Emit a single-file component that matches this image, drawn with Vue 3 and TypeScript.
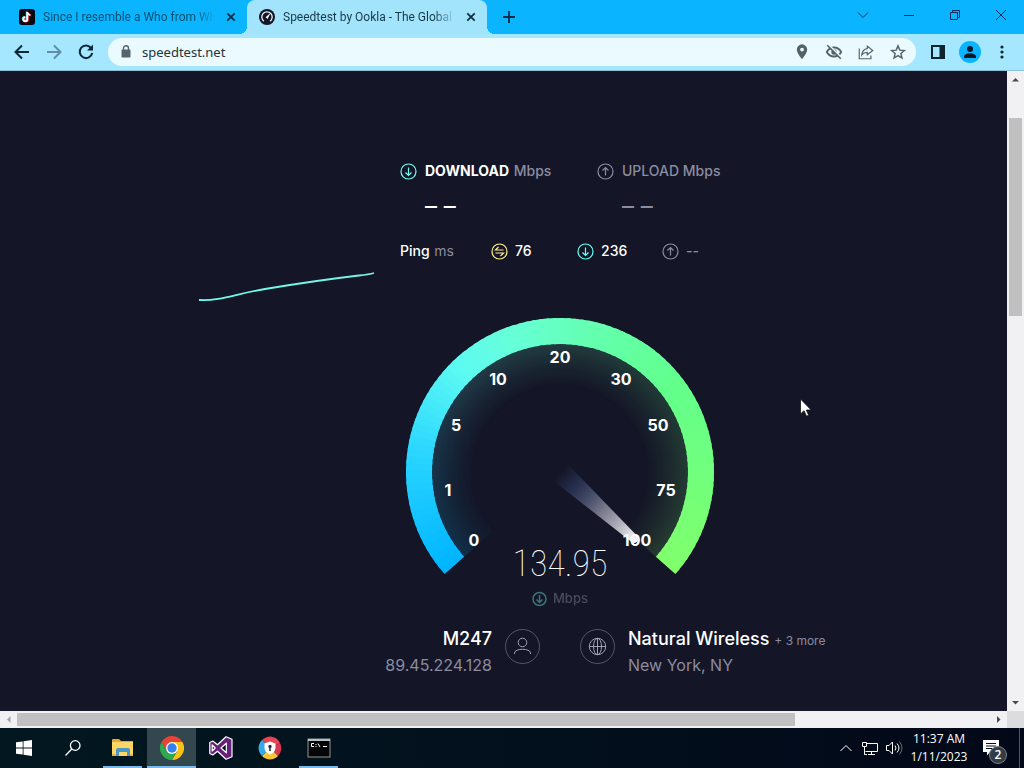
<script setup lang="ts">
import { ref } from 'vue'

type Rgb = [number, number, number]

const address = ref('speedtest.net')

const START = -131.5
const END = 131.5
const STEPS = 100

const stops: { at: number; rgb: Rgb }[] = [
  { at: 0, rgb: [0, 180, 255] },
  { at: 0.18, rgb: [40, 212, 255] },
  { at: 0.33, rgb: [92, 250, 243] },
  { at: 0.42, rgb: [102, 255, 218] },
  { at: 0.54, rgb: [100, 255, 178] },
  { at: 0.7, rgb: [98, 255, 140] },
  { at: 1, rgb: [128, 255, 108] },
]

function colourAt(t: number): string {
  let i = 1
  while (i < stops.length - 1 && t > stops[i].at) i++
  const a = stops[i - 1]
  const b = stops[i]
  const k = (t - a.at) / (b.at - a.at)
  const mix = a.rgb.map((v, n) => Math.round(v + (b.rgb[n] - v) * k))
  return `rgb(${mix.join(',')})`
}

function point(deg: number, r: number): string {
  const rad = (deg * Math.PI) / 180
  return `${(Math.sin(rad) * r).toFixed(2)} ${(-Math.cos(rad) * r).toFixed(2)}`
}

function arc(from: number, to: number, outer: number, inner: number): string {
  return `M${point(from, outer)}A${outer} ${outer} 0 0 1 ${point(to, outer)}L${point(to, inner)}A${inner} ${inner} 0 0 0 ${point(from, inner)}Z`
}

const segments = Array.from({ length: STEPS }, (_, i) => {
  const size = (END - START) / STEPS
  const from = START + i * size
  const to = Math.min(from + size * 1.5, END)
  return {
    fill: colourAt((i + 0.5) / STEPS),
    band: arc(from, to, 154, 128),
    glow: arc(from, to, 129, 70),
  }
})

const ticks = [
  { label: '0', x: -86, y: 74 },
  { label: '1', x: -112, y: 24 },
  { label: '5', x: -104, y: -41 },
  { label: '10', x: -62, y: -87 },
  { label: '20', x: 0, y: -109 },
  { label: '30', x: 61, y: -87 },
  { label: '50', x: 98, y: -41 },
  { label: '75', x: 106, y: 24 },
  { label: '100', x: 77, y: 74 },
]
</script>

<template>
  <div class="desktop">
    <header class="tabs">
      <div class="tab">
        <svg class="favicon" viewBox="0 0 16 16" aria-hidden="true">
          <rect width="16" height="16" rx="3" fill="#080810" />
          <path d="M8.3 3v7.2a2 2 0 1 1-2-2M8.3 3c.2 1.7 1.3 2.8 3 3" fill="none" stroke="#35e5e5" stroke-width="1.8" transform="translate(-.6 -.4)" />
          <path d="M8.3 3v7.2a2 2 0 1 1-2-2M8.3 3c.2 1.7 1.3 2.8 3 3" fill="none" stroke="#f34" stroke-width="1.8" transform="translate(.6 .4)" />
          <path d="M8.3 3v7.2a2 2 0 1 1-2-2M8.3 3c.2 1.7 1.3 2.8 3 3" fill="none" stroke="#fff" stroke-width="1.7" />
        </svg>
        <span class="title">Since I resemble a Who from Wh</span>
        <button class="close" aria-label="Close tab"><svg viewBox="0 0 16 16"><path d="M4.3 4.3l7.4 7.4M11.7 4.3l-7.4 7.4" /></svg></button>
      </div>
      <div class="tab active">
        <svg class="favicon" viewBox="0 0 16 16" aria-hidden="true">
          <circle cx="8" cy="8" r="8" fill="#141526" />
          <path d="M4.9 12.2a5.2 5.2 0 1 1 6.2 0" fill="none" stroke="#e9f6ff" stroke-width="1.3" />
          <path d="M6.9 8.3l3.8-3.3-2.2 4.5z" fill="#fff" stroke="#fff" stroke-width=".6" />
        </svg>
        <span class="title">Speedtest by Ookla - The Global</span>
        <button class="close" aria-label="Close tab"><svg viewBox="0 0 16 16"><path d="M4.3 4.3l7.4 7.4M11.7 4.3l-7.4 7.4" /></svg></button>
      </div>
      <button class="new-tab" aria-label="New tab"><svg viewBox="0 0 16 16"><path d="M8 2v12M2 8h12" /></svg></button>
      <div class="window-controls">
        <button aria-label="Search tabs"><svg viewBox="0 0 12 12"><path d="M1 3.5l5 5 5-5" /></svg></button>
        <button aria-label="Minimize"><svg viewBox="0 0 12 12"><path d="M1 6.5h10" /></svg></button>
        <button aria-label="Restore"><svg viewBox="0 0 12 12"><path d="M1.5 3.5h7v7h-7zM3.5 3.5v-2h7v7h-2" /></svg></button>
        <button aria-label="Close"><svg viewBox="0 0 12 12"><path d="M1 1l10 10M11 1L1 11" /></svg></button>
      </div>
    </header>

    <nav class="toolbar">
      <button class="tool" aria-label="Back"><svg viewBox="0 0 20 20"><path d="M17 10H4M10 3.5L3.5 10l6.5 6.5" class="bold" /></svg></button>
      <button class="tool faded" aria-label="Forward"><svg viewBox="0 0 20 20"><path d="M3 10h13M10 3.5l6.5 6.5-6.5 6.5" class="bold" /></svg></button>
      <button class="tool" aria-label="Reload"><svg viewBox="0 0 20 20"><path d="M15.2 6.2A6.3 6.3 0 1 0 16.2 11" class="bold" /><path d="M17 2.5v6h-6z" fill="#0b2638" /></svg></button>
      <div class="omnibox">
        <svg class="lock" viewBox="0 0 12 16" aria-hidden="true"><rect x="1.5" y="5.5" width="9" height="8" rx="1" fill="#56656c" /><path d="M3.5 6V4.2a2.5 2.5 0 0 1 5 0V6" fill="none" stroke="#56656c" stroke-width="1.4" /></svg>
        <input v-model="address" class="address" type="text" aria-label="Address" />
        <button class="tool grey" aria-label="Location"><svg viewBox="0 0 20 20"><path fill-rule="evenodd" d="M10 1.5a5.8 5.8 0 0 0-5.8 5.8c0 4.2 5.8 10.7 5.8 10.7s5.8-6.5 5.8-10.7A5.8 5.8 0 0 0 10 1.5zm0 3.7a2.1 2.1 0 1 1 0 4.2 2.1 2.1 0 0 1 0-4.2z" fill="#53636a" /></svg></button>
        <button class="tool grey" aria-label="Third-party cookies blocked"><svg viewBox="0 0 20 20"><path d="M2 10c1.8-3.3 4.6-5 8-5s6.2 1.7 8 5c-1.8 3.3-4.6 5-8 5s-6.2-1.7-8-5z" fill="none" stroke="#53636a" stroke-width="2" /><circle cx="10" cy="10" r="3" fill="#53636a" /><path d="M3.5 1.5L19 17" stroke="#eafaff" stroke-width="2" /><path d="M2.5 2.5l15 15" stroke="#53636a" stroke-width="1.7" /></svg></button>
        <button class="tool grey" aria-label="Share"><svg viewBox="0 0 20 20"><path d="M2.5 6v11.5h13V14M11.5 3.5l6 4.8-6 4.7v-2.6c-3 0-4.7.8-6.2 2.8.4-4 2.4-6.6 6.2-7z" fill="none" stroke="#53636a" stroke-width="1.3" /></svg></button>
        <button class="tool grey" aria-label="Bookmark this page"><svg viewBox="0 0 20 20"><path d="M10 3.2l2 4.7 5.1.4-3.9 3.4 1.2 5-4.4-2.7-4.4 2.7 1.2-5-3.9-3.4 5.1-.4z" fill="none" stroke="#53636a" stroke-width="1.6" /></svg></button>
      </div>
      <div class="tool-group">
        <button class="tool" aria-label="Side panel"><svg viewBox="0 0 20 20"><path fill-rule="evenodd" d="M3 3h14v14H3zm2 2v10h6.5V5z" fill="#10242e" /></svg></button>
        <button class="tool" aria-label="Profile"><svg class="avatar" viewBox="0 0 22 22"><circle cx="11" cy="11" r="11" fill="#0ab4ff" /><circle cx="11" cy="8" r="3" fill="#081722" /><path d="M5 16c0-5 12-5 12 0v1H5z" fill="#081722" /></svg></button>
        <button class="tool" aria-label="Menu"><svg viewBox="0 0 20 20" fill="#10242e"><circle cx="10" cy="5" r="1.6" /><circle cx="10" cy="10" r="1.6" /><circle cx="10" cy="15" r="1.6" /></svg></button>
      </div>
    </nav>

    <main class="viewport">
      <section class="page">
        <svg class="graph" viewBox="0 0 176 34" aria-hidden="true">
          <defs><linearGradient id="line"><stop offset="0" stop-color="#6afff3" /><stop offset="1" stop-color="#7ceee0" /></linearGradient></defs>
          <path d="M0 30C22 31 36 24 66 19S130 9 160 5.5Q170 4.5 175 3" fill="none" stroke="url(#line)" stroke-width="1.8" />
        </svg>

        <div class="results">
          <div class="speeds">
            <div class="speed">
              <svg class="ring teal" viewBox="0 0 17 17"><circle cx="8.5" cy="8.5" r="7.5" /><path d="M8.5 4.5v8M5.5 9.5l3 3 3-3" /></svg>
              <div class="name"><strong>DOWNLOAD</strong> Mbps</div>
              <div class="value">– –</div>
            </div>
            <div class="speed muted">
              <svg class="ring dim" viewBox="0 0 17 17"><circle cx="8.5" cy="8.5" r="7.5" /><path d="M8.5 12.5v-8M5.5 7.5l3-3 3 3" /></svg>
              <div class="name">UPLOAD Mbps</div>
              <div class="value">– –</div>
            </div>
          </div>

          <div class="pings">
            <span class="ping-name">Ping <small>ms</small></span>
            <span class="ping"><svg class="ring yellow" viewBox="0 0 17 17"><circle cx="8.5" cy="8.5" r="7.5" /><path d="M12.5 7h-8l3-3M4.5 10h8l-3 3" /></svg>76</span>
            <span class="ping"><svg class="ring teal" viewBox="0 0 17 17"><circle cx="8.5" cy="8.5" r="7.5" /><path d="M8.5 4.5v8M5.5 9.5l3 3 3-3" /></svg>236</span>
            <span class="ping muted"><svg class="ring dim" viewBox="0 0 17 17"><circle cx="8.5" cy="8.5" r="7.5" /><path d="M8.5 12.5v-8M5.5 7.5l3-3 3 3" /></svg>--</span>
          </div>

          <svg class="gauge" viewBox="-160 -162 320 305" role="img" aria-label="Download speed 134.95 Mbps">
            <defs>
              <radialGradient id="fade" gradientUnits="userSpaceOnUse" cx="0" cy="0" r="129">
                <stop offset="0.66" stop-color="#fff" stop-opacity="0" />
                <stop offset="0.82" stop-color="#fff" stop-opacity="0.07" />
                <stop offset="1" stop-color="#fff" stop-opacity="0.17" />
              </radialGradient>
              <mask id="inner" maskUnits="userSpaceOnUse" x="-160" y="-160" width="320" height="320">
                <circle r="130" fill="url(#fade)" />
              </mask>
              <linearGradient id="needle">
                <stop offset="0" stop-color="#5a78c8" stop-opacity="0" />
                <stop offset="0.2" stop-color="#5a78b8" stop-opacity="0.26" />
                <stop offset="0.55" stop-color="#c8c8dc" stop-opacity="0.55" />
                <stop offset="1" stop-color="#fff" />
              </linearGradient>
            </defs>
            <g mask="url(#inner)"><path v-for="(s, i) in segments" :key="i" :d="s.glow" :fill="s.fill" /></g>
            <path v-for="(s, i) in segments" :key="i" :d="s.band" :fill="s.fill" />
            <text v-for="t in ticks" :key="t.label" class="tick" :x="t.x" :y="t.y">{{ t.label }}</text>
            <path d="M0-11L102-4q4 4 0 8L0 11z" fill="url(#needle)" transform="rotate(42)" />
            <text class="reading" x="0" y="104">134.95</text>
            <g class="unit">
              <circle cx="-20.5" cy="127" r="6.5" />
              <path d="M-20.5 123v7M-23.5 127.5l3 3 3-3" />
              <text x="-7" y="131">Mbps</text>
            </g>
          </svg>
        </div>

        <div class="hosts">
          <div class="host client">
            <div><div class="host-name">M247</div><div class="host-sub">89.45.224.128</div></div>
            <svg class="badge" viewBox="0 0 35 35"><circle cx="17.5" cy="17.5" r="17" class="edge" /><circle cx="17.5" cy="13.5" r="4.3" /><path d="M9.5 25v-1c0-5 16-5 16 0v1" /></svg>
          </div>
          <div class="host">
            <svg class="badge" viewBox="0 0 35 35"><circle cx="17.5" cy="17.5" r="17" class="edge" /><circle cx="17.5" cy="17.5" r="8.2" /><ellipse cx="17.5" cy="17.5" rx="4" ry="8.2" /><path d="M17.5 9.3v16.4M9.3 17.5h16.4" /></svg>
            <div><div class="host-name">Natural Wireless <a href="#servers">+ 3 more</a></div><div class="host-sub">New York, NY</div></div>
          </div>
        </div>
      </section>

      <div class="vbar">
        <svg viewBox="0 0 17 17"><path d="M5 10.5h7L8.5 7z" /></svg>
        <div class="track"><div class="thumb"></div></div>
        <svg viewBox="0 0 17 17"><path d="M5 7h7l-3.5 3.5z" /></svg>
      </div>
      <div class="hbar">
        <svg class="off" viewBox="0 0 17 17"><path d="M10.5 5v7L7 8.5z" /></svg>
        <div class="track"><div class="thumb"></div></div>
        <svg viewBox="0 0 17 17"><path d="M7 5v7l3.5-3.5z" /></svg>
      </div>
      <div class="corner"></div>

      <svg class="cursor" viewBox="0 0 12 19" aria-hidden="true"><path d="M.5 1v15l3.5-3.3 2.5 5.5 2.2-1L6.3 12h4.9z" fill="#fff" stroke="#111" stroke-width=".8" /></svg>
    </main>

    <footer class="taskbar">
      <button aria-label="Start"><svg class="small" viewBox="0 0 16 16" fill="#fff"><path d="M0 2.3L6.7 1.4v6.2H0zM7.5 1.3L16 0v7.6H7.5zM0 8.4h6.7v6.2L0 13.7zM7.5 8.4H16V16l-8.5-1.2z" /></svg></button>
      <button aria-label="Search"><svg class="small" viewBox="0 0 16 16" fill="none" stroke="#fff" stroke-width="1.3"><circle cx="10.2" cy="5.5" r="4.8" /><path d="M6.8 9L.5 15.5" /></svg></button>
      <button class="open" aria-label="File Explorer"><svg viewBox="0 0 24 24"><path d="M1 4q0-1 1-1h6l2 2h12v4H1z" fill="#e8a92c" /><path d="M1 6h21v14H1z" fill="#fcd567" /><path d="M5 20v-6q0-2 2-2h10q2 0 2 2v6h-3v-4H8v4z" fill="#4a97c9" /><path d="M1 18h4v2H1zM19 18h3v2h-3z" fill="#e9b64a" /></svg></button>
      <button class="current" aria-label="Google Chrome"><svg viewBox="0 0 24 24"><path d="M12 24l5.2-9L12 6h10.4A12 12 0 0 1 12 24z" fill="#fbc116" /><path d="M1.6 6A12 12 0 0 0 12 24l5.2-9H6.8z" fill="#2da94f" /><path d="M1.6 6l5.2 9L12 6h10.4A12 12 0 0 0 1.6 6z" fill="#e84335" /><circle cx="12" cy="12" r="6" fill="#fff" /><circle cx="12" cy="12" r="4.7" fill="#3480ee" /></svg></button>
      <button aria-label="Visual Studio"><svg viewBox="0 0 24 24"><path fill-rule="evenodd" d="M17 .8l6 2.4v17.6l-6 2.4-8.5-8L3.8 19 .8 17.500v-11L3.800 5l4.700 3.800zM17.300 7.200L12 12l5.300 4.800zM3.200 9v6l3-3z" fill="#68217a" stroke="#fff" stroke-width="1.2" stroke-linejoin="round" /></svg></button>
      <button aria-label="Secure Browser"><svg viewBox="0 0 24 24"><path d="M12 12L4 4a11 11 0 0 1 18 3z" fill="#ea4351" /><path d="M12 12l10-5a11 11 0 0 1-2 13z" fill="#da3552" /><path d="M12 12l8 8a11 11 0 0 1-16 0z" fill="#fac43a" /><path d="M12 12l-8 8A11 11 0 0 1 4 4z" fill="#38a9e8" /><path d="M12 5.5l5.5 2v4c0 4-2.5 5.5-5.5 7-3-1.5-5.5-3-5.5-7v-4z" fill="#fff" /><circle cx="12" cy="10.5" r="1.7" fill="#28333b" /><path d="M11.2 11h1.6v4h-1.6z" fill="#28333b" /></svg></button>
      <button class="open" aria-label="Command Prompt"><svg viewBox="0 0 24 24"><rect x="1" y="3" width="22" height="18" fill="#050505" stroke="#8f989b" /><path d="M1 3h22v2H1z" fill="#b9c1c4" /><path d="M7 7.5H4.5v3H7M9 8v1M9 10v1M11 7.5l2 3.5M16 10.5h4" fill="none" stroke="#fff" /></svg></button>
      <div class="tray">
        <svg class="t-chev" viewBox="0 0 12 12"><path d="M.5 9L6 3.5 11.5 9" /></svg>
        <svg class="t-icon" viewBox="0 0 18 18"><path d="M5.5 4.5h11v8H4.5M10.5 12.5v3M7 15.5h7M1.5 3.5h4v4h-4zM3.5 7.5v8H6" /></svg>
        <svg class="t-icon" viewBox="0 0 18 18"><path d="M1.5 6.5H4L7.5 3v12L4 11.5H1.5zM10 6.5q2 2.5 0 5M12 4.5q4 4.5 0 9" /><path d="M14.5 2.5q5 6.5 0 13" opacity=".4" /></svg>
        <div class="clock"><time>11:37 AM</time><time>1/11/2023</time></div>
        <button class="notes" aria-label="2 notifications"><svg viewBox="0 0 16 16"><path d="M0 0h16v12H7l-3 3.5V12H0z" fill="#fff" /><path d="M3 3.5h10M3 6h10M3 8.5h6" stroke="#06121d" /></svg><span>2</span></button>
      </div>
    </footer>
  </div>
</template>

<style>
body {
  margin: 0;
}
</style>

<style scoped>
.desktop {
  display: flex;
  flex-direction: column;
  min-height: 100vh;
  background: #141526;
  font-family: 'Open Sans', 'Noto Sans', sans-serif;
}
button {
  display: flex;
  align-items: center;
  justify-content: center;
  flex: none;
  padding: 0;
  border: 0;
  background: none;
  color: inherit;
  font: inherit;
}
svg {
  display: block;
  flex: none;
}

.tabs {
  display: flex;
  height: 34px;
  padding-left: 7px;
  background: #0ab4ff;
}
.tab {
  position: relative;
  box-sizing: border-box;
  display: flex;
  align-items: center;
  gap: 8px;
  flex: 0 1 240px;
  min-width: 0;
  padding: 0 8px 0 12px;
  color: #07506f;
  font-family: Roboto, 'Open Sans', sans-serif;
  font-size: 12px;
}
.tab.active {
  border-radius: 8px 8px 0 0;
  background: #a3e4fd;
  color: #16394a;
}
.tab.active::before,
.tab.active::after {
  content: '';
  position: absolute;
  bottom: 0;
  width: 8px;
  height: 8px;
}
.tab.active::before {
  left: -8px;
  background: radial-gradient(circle at 0 0, transparent 8px, #a3e4fd 8px);
}
.tab.active::after {
  right: -8px;
  background: radial-gradient(circle at 100% 0, transparent 8px, #a3e4fd 8px);
}
.favicon {
  width: 16px;
  height: 16px;
}
.title {
  flex: 1;
  min-width: 0;
  overflow: hidden;
  white-space: nowrap;
  mask-image: linear-gradient(90deg, #000 88%, transparent);
}
.close svg,
.new-tab svg {
  width: 16px;
  height: 16px;
  fill: none;
  stroke: #0b2d44;
  stroke-width: 1.8;
}
.new-tab {
  width: 28px;
  margin-left: 8px;
}
.window-controls {
  display: flex;
  height: 29px;
  margin-left: auto;
}
.window-controls button {
  width: 46px;
}
.window-controls svg {
  width: 12px;
  height: 12px;
  fill: none;
  stroke: #0c2c5c;
}

.toolbar {
  display: flex;
  align-items: center;
  height: 36px;
  padding: 0 6px;
  border-bottom: 1px solid #8dbfd6;
  background: #a4e7ff;
}
.tool {
  width: 32px;
  height: 28px;
}
.tool svg {
  width: 20px;
  height: 20px;
}
.tool.grey svg {
  width: 18px;
  height: 18px;
}
.tool svg.avatar {
  width: 22px;
  height: 22px;
}
.tool .bold {
  fill: none;
  stroke: #0b2638;
  stroke-width: 2;
}
.faded {
  opacity: 0.45;
}
.omnibox {
  box-sizing: border-box;
  display: flex;
  align-items: center;
  flex: 1;
  min-width: 0;
  height: 28px;
  margin: 0 6px;
  padding: 0 2px 0 12px;
  border-radius: 14px;
  background: #eafaff;
}
.lock {
  width: 12px;
  height: 16px;
}
.address {
  flex: 1;
  min-width: 0;
  margin-left: 10px;
  padding: 0;
  border: 0;
  outline: 0;
  background: none;
  color: #24343c;
  font: 13px 'Noto Sans', 'Open Sans', sans-serif;
}
.tool-group {
  display: flex;
}

.viewport {
  position: relative;
  display: grid;
  grid-template: 1fr 17px / minmax(0, 1fr) 17px;
  flex: 1;
}
.page {
  display: grid;
  grid-template-columns: 175px minmax(0, 1fr);
  align-content: start;
  column-gap: 26px;
  padding-left: 199px;
  background: #141526;
  color: #fff;
  font-family: Inter, Lato, sans-serif;
}
.graph {
  width: 176px;
  margin-top: 199px;
}
.results {
  padding-top: 88px;
}
.speeds {
  display: grid;
  grid-template-columns: 197px auto;
  justify-content: start;
}
.speed {
  display: grid;
  grid-template-columns: 17px auto;
  align-items: center;
  column-gap: 8px;
  row-gap: 11px;
  font-size: 14px;
  line-height: 24px;
}
.name {
  color: #8b8ca0;
  font-weight: 500;
}
.name strong {
  margin-right: 1px;
  color: #fff;
  font-weight: 700;
}
.value {
  grid-column: 2;
  font-size: 24px;
  font-weight: 400;
}
.muted {
  color: #8b8ca0;
}
.ring {
  width: 17px;
  height: 17px;
  fill: none;
  stroke-width: 1.2;
}
.teal {
  stroke: #6afff3;
}
.dim {
  stroke: #8b8ca0;
}
.yellow {
  stroke: #fff38e;
}
.pings {
  display: grid;
  grid-template-columns: 91px 86px 85px auto;
  justify-content: start;
  margin-top: 21px;
  font-size: 14px;
  font-weight: 500;
  line-height: 24px;
}
.ping-name small {
  margin-left: 1px;
  color: #8b8ca0;
  font-size: 14px;
  font-weight: 400;
}
.ping {
  display: flex;
  align-items: center;
  gap: 7px;
}
.gauge {
  width: 320px;
  margin-top: 47px;
}
.tick {
  fill: #fff;
  font: 700 16px Inter, sans-serif;
  text-anchor: middle;
}
.reading {
  fill: #fff;
  font: 100 36px 'Roboto Condensed', 'Liberation Sans Narrow', Roboto, sans-serif;
  text-anchor: middle;
}
.unit {
  opacity: 0.45;
  fill: none;
  stroke: #6ae8dc;
  stroke-width: 1.5;
}
.unit text {
  fill: #8b8ca0;
  stroke: none;
  font: 500 13px Inter, sans-serif;
}
.hosts {
  display: grid;
  grid-column: 1 / -1;
  grid-template-columns: 341px minmax(0, 1fr);
  column-gap: 40px;
  margin-top: 10px;
}
.host {
  display: flex;
  gap: 13px;
}
.client {
  justify-content: flex-end;
  text-align: right;
}
.host-name {
  font-size: 18px;
  font-weight: 500;
  line-height: 27px;
}
.host-name a {
  color: #8b8ca0;
  font-size: 12px;
  font-weight: 400;
  line-height: 12px;
  text-decoration: none;
}
.host-sub {
  color: #8b8ca0;
  font-size: 16px;
  line-height: 27px;
}
.badge {
  width: 35px;
  height: 35px;
  margin-top: 4px;
  fill: none;
  stroke: #a0a1b4;
}
.edge {
  stroke: #55566a;
}

.vbar,
.hbar {
  display: flex;
  background: #f1f1f3;
  fill: #4a4a4e;
}
.vbar {
  flex-direction: column;
}
.vbar > svg,
.hbar > svg {
  width: 17px;
  height: 17px;
}
.hbar > svg.off {
  fill: #a3a3a6;
}
.track {
  flex: 1;
}
.thumb {
  background: #c0c0c1;
}
.vbar .track {
  display: flex;
  flex-direction: column;
}
.vbar .thumb {
  height: 198px;
  margin: 30px 2px 0;
}
.hbar .thumb {
  width: 80%;
  height: 13px;
  margin-top: 2px;
}
.corner {
  background: #dcdcde;
}
.cursor {
  position: absolute;
  left: 800px;
  top: 327px;
  width: 12px;
  height: 19px;
}

.taskbar {
  display: flex;
  height: 40px;
  background: linear-gradient(90deg, #021820, #020d1c 70%, #020818);
  color: #fff;
}
.taskbar > button {
  box-sizing: border-box;
  position: relative;
  width: 49px;
}
.taskbar > button svg {
  width: 24px;
  height: 24px;
}
.taskbar > button svg.small {
  width: 16px;
  height: 16px;
  margin-right: 2px;
}
.open::after,
.current::after {
  content: '';
  position: absolute;
  right: 5px;
  bottom: 0;
  left: 5px;
  height: 2px;
  background: #76b9ed;
}
.current {
  background: #33474e;
}
.current::after {
  right: 0;
  left: 0;
}
.tray {
  display: flex;
  align-items: center;
  margin-right: 4px;
  margin-left: auto;
  padding-right: 6px;
  border-right: 1px solid #4b5661;
}
.tray > svg {
  fill: none;
  stroke: #fff;
}
.t-chev {
  width: 12px;
  height: 12px;
  margin-right: 9px;
}
.t-icon {
  width: 18px;
  height: 18px;
  margin-right: 6px;
}
.clock {
  display: flex;
  flex-direction: column;
  width: 60px;
  font-size: 12px;
  line-height: 18px;
  text-align: center;
  white-space: nowrap;
}
.notes {
  position: relative;
  width: 44px;
  height: 40px;
}
.notes svg {
  width: 16px;
  height: 16px;
}
.notes span {
  position: absolute;
  right: 6px;
  bottom: 4px;
  width: 16px;
  height: 16px;
  border: 1px solid #788088;
  border-radius: 50%;
  background: #333c45;
  font-size: 12px;
  font-weight: 600;
  line-height: 16px;
}
</style>
